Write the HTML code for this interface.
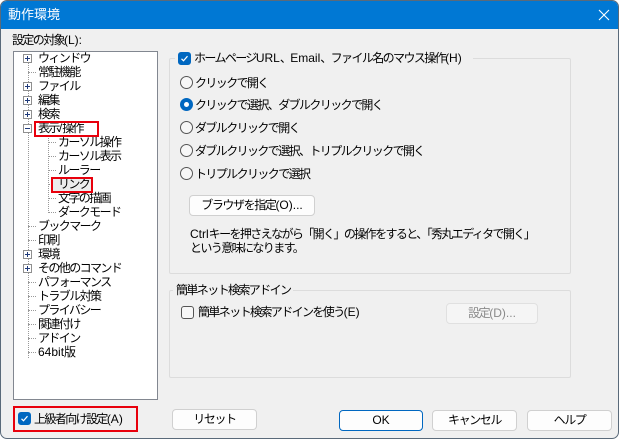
<!DOCTYPE html>
<html><head><meta charset="utf-8"><style>
*{margin:0;padding:0;box-sizing:border-box}
body{width:619px;height:439px;overflow:hidden;background:#fff;font-family:"Liberation Sans","Noto Sans CJK JP",sans-serif;font-size:12px;color:#000;position:relative}
.win{position:absolute;left:0;top:0;width:619px;height:439px;background:#f0f0f0;border:1px solid #5a6a7a;border-radius:7px 7px 7px 7px;overflow:hidden}
.title{position:absolute;left:0;top:0;width:619px;height:28px;background:#0078d4;color:#fff;font-size:13px;line-height:28px;padding-left:7px}
.a{position:absolute;white-space:nowrap;line-height:14px;letter-spacing:-1.6px}
.l{letter-spacing:0}
.tree{position:absolute;left:12px;top:50px;width:145px;height:349px;background:#fff;border:1px solid #828790}
.plus{position:absolute;width:9px;height:9px;border:1px solid #8f8f8f;background:#fff}
.plus:before{content:"";position:absolute;left:1px;top:3px;width:5px;height:1px;background:#1f3a7a}
.plus.p:after{content:"";position:absolute;left:3px;top:1px;width:1px;height:5px;background:#1f3a7a}
.vd{position:absolute;width:0;border-left:1px dotted #999}
.hd{position:absolute;height:0;border-top:1px dotted #999}
.red{position:absolute;border:2px solid #e8000c}
.grp{position:absolute;border:1px solid #dcdcdc;border-radius:2px}
.btn{position:absolute;height:21px;background:#fdfdfd;border:1px solid #d0d0d0;border-radius:4px;text-align:center;line-height:19px;letter-spacing:-1.4px}
.radio{position:absolute;width:13px;height:13px;border:1px solid #555;border-radius:50%;background:#f7f7f7}
.radio.on{background:#0067c0;border-color:#0067c0}
.radio.on:after{content:"";position:absolute;left:3px;top:3px;width:5px;height:5px;border-radius:50%;background:#fff}
.cb{position:absolute;width:13px;height:13px;border:1px solid #555;border-radius:3px;background:#f7f7f7}
.cb.on{background:#0067c0;border-color:#0067c0}
</style></head><body><div class="win">
<div class="title">動作環境<svg width="12" height="12" viewBox="0 0 12 12" style="position:absolute;left:597px;top:8px"><path d="M1 1L11 11M11 1L1 11" stroke="#fff" stroke-width="1.1"/></svg></div>
<div class="a" style="left:11px;top:32px">設定の対象<span class="l">(L):</span></div>
<div class="tree">
<div class="vd" style="left:14px;top:6px;height:300px"></div>
<div class="vd" style="left:34px;top:84px;height:77px"></div>
</div>
<div style="position:absolute;left:0;top:0">
<div class="plus p" style="left:22px;top:53px"></div>
<div class="plus p" style="left:22px;top:81px"></div>
<div class="plus p" style="left:22px;top:95px"></div>
<div class="plus p" style="left:22px;top:109px"></div>
<div class="plus" style="left:22px;top:123px"></div>
<div class="plus p" style="left:22px;top:249px"></div>
<div class="plus p" style="left:22px;top:263px"></div>
<div class="a" style="left:37px;top:50px">ウィンドウ</div>
<div class="hd" style="left:27px;top:71px;width:8px"></div><div class="a" style="left:37px;top:64px">常駐機能</div>
<div class="a" style="left:37px;top:78px">ファイル</div>
<div class="a" style="left:37px;top:92px">編集</div>
<div class="a" style="left:37px;top:106px">検索</div>
<div class="a" style="left:37px;top:120px">表示<span class="l">/</span>操作</div>
<div class="hd" style="left:47px;top:141px;width:8px"></div><div class="a" style="left:57px;top:134px">カーソル操作</div>
<div class="hd" style="left:47px;top:155px;width:8px"></div><div class="a" style="left:57px;top:148px">カーソル表示</div>
<div class="hd" style="left:47px;top:169px;width:8px"></div><div class="a" style="left:57px;top:162px">ルーラー</div>
<div class="hd" style="left:47px;top:183px;width:8px"></div>
<div class="hd" style="left:47px;top:197px;width:8px"></div><div class="a" style="left:57px;top:190px">文字の描画</div>
<div class="hd" style="left:47px;top:211px;width:8px"></div><div class="a" style="left:57px;top:204px">ダークモード</div>
<div class="hd" style="left:27px;top:225px;width:8px"></div><div class="a" style="left:37px;top:218px">ブックマーク</div>
<div class="hd" style="left:27px;top:239px;width:8px"></div><div class="a" style="left:37px;top:232px">印刷</div>
<div class="a" style="left:37px;top:246px">環境</div>
<div class="a" style="left:37px;top:260px">その他のコマンド</div>
<div class="hd" style="left:27px;top:281px;width:8px"></div><div class="a" style="left:37px;top:274px">パフォーマンス</div>
<div class="hd" style="left:27px;top:295px;width:8px"></div><div class="a" style="left:37px;top:288px">トラブル対策</div>
<div class="hd" style="left:27px;top:309px;width:8px"></div><div class="a" style="left:37px;top:302px">プライバシー</div>
<div class="hd" style="left:27px;top:323px;width:8px"></div><div class="a" style="left:37px;top:316px">関連付け</div>
<div class="hd" style="left:27px;top:337px;width:8px"></div><div class="a" style="left:37px;top:330px">アドイン</div>
<div class="hd" style="left:27px;top:351px;width:8px"></div><div class="a" style="left:37px;top:344px"><span class="l">64bit</span>版</div>
<div class="red" style="left:33px;top:120px;width:65px;height:16px"></div>
<div style="position:absolute;left:52px;top:177px;width:38px;height:13px;background:#ececec"></div>
<div class="a" style="left:57px;top:176px">リンク</div>
<div class="red" style="left:50px;top:176px;width:42px;height:16px"></div>
</div>
<div class="grp" style="left:168px;top:57px;width:402px;height:216px"></div>
<div style="position:absolute;left:174px;top:50px;width:298px;height:14px;background:#f0f0f0"></div>
<div class="cb on" style="left:177px;top:51px"><svg width="11" height="11" viewBox="0 0 11 11" style="position:absolute;left:0;top:0"><path d="M2.5 5.8 L4.5 7.8 L8.5 3.2" stroke="#fff" stroke-width="1.2" fill="none"/></svg></div>
<div class="a" style="left:193px;top:50px">ホームページ<span class="l">URL</span>、<span class="l">Email</span>、ファイル名のマウス操作<span class="l">(H)</span></div>
<div class="radio" style="left:179px;top:75px"></div><div class="a" style="left:194px;top:75px">クリックで開く</div>
<div class="radio on" style="left:179px;top:97px"></div><div class="a" style="left:194px;top:97px">クリックで選択、ダブルクリックで開く</div>
<div class="radio" style="left:179px;top:120px"></div><div class="a" style="left:194px;top:120px">ダブルクリックで開く</div>
<div class="radio" style="left:179px;top:143px"></div><div class="a" style="left:194px;top:143px">ダブルクリックで選択、トリプルクリックで開く</div>
<div class="radio" style="left:179px;top:166px"></div><div class="a" style="left:194px;top:166px">トリプルクリックで選択</div>
<div class="btn" style="left:188px;top:194px;width:126px">ブラウザを指定<span class="l">(O)...</span></div>
<div class="a" style="left:189px;top:226px"><span class="l">Ctrl</span>キーを押さえながら「開く」の操作をすると、「秀丸エディタで開く」</div>
<div class="a" style="left:189px;top:240px">という意味になります。</div>
<div class="grp" style="left:168px;top:289px;width:402px;height:88px"></div>
<div class="a" style="left:172px;top:282px;background:#f0f0f0;padding:0 3px">簡単ネット検索アドイン</div>
<div class="cb" style="left:180px;top:305px"></div>
<div class="a" style="left:197px;top:304px">簡単ネット検索アドインを使う<span class="l">(E)</span></div>
<div class="btn" style="left:445px;top:302px;width:92px;color:#8a8a8a;border-color:#e0e0e0;background:#f5f5f5">設定<span class="l">(D)...</span></div>
<div class="red" style="left:12px;top:405px;width:125px;height:26px"></div>
<div class="cb on" style="left:17px;top:411px"><svg width="11" height="11" viewBox="0 0 11 11" style="position:absolute;left:0;top:0"><path d="M2.5 5.8 L4.5 7.8 L8.5 3.2" stroke="#fff" stroke-width="1.2" fill="none"/></svg></div>
<div class="a" style="left:33px;top:411px">上級者向け設定<span class="l">(A)</span></div>
<div class="btn" style="left:171px;top:408px;width:85px">リセット</div>
<div class="btn" style="left:338px;top:409px;width:84px;border-color:#0067c0"><span class="l">OK</span></div>
<div class="btn" style="left:431px;top:409px;width:85px">キャンセル</div>
<div class="btn" style="left:526px;top:409px;width:85px">ヘルプ</div>
</div></body></html>
